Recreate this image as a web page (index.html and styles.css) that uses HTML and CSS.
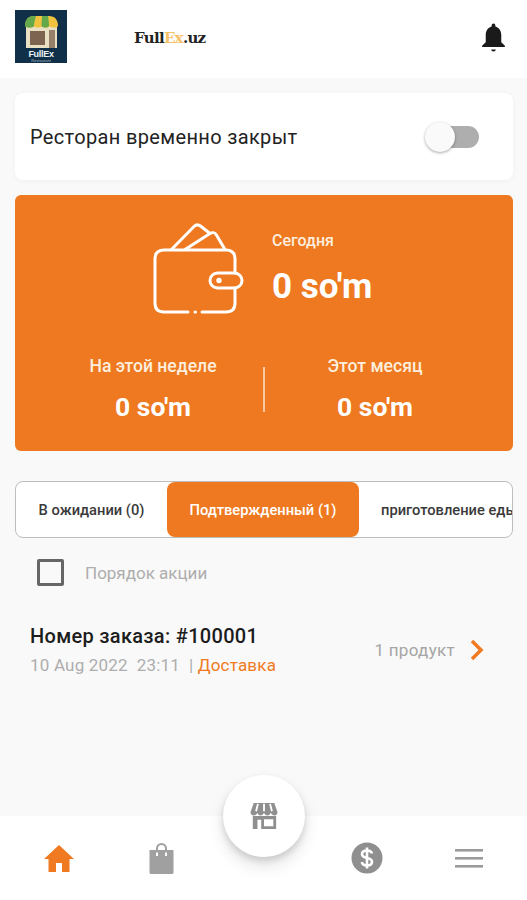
FILE: index.html
```html
<!DOCTYPE html>
<html lang="ru">
<head>
<meta charset="UTF-8">
<meta name="viewport" content="width=device-width, initial-scale=1.0">
<title>FullEx.uz</title>
<link rel="stylesheet" href="styles.css">
</head>
<body>
<div class="app">
  <header class="header">
    <div class="logo">
      <svg viewBox="0 0 52 53" width="52" height="53">
        <rect width="52" height="53" fill="#10304a"/>
        <rect x="11" y="15" width="31" height="23" fill="#e9e0c4"/>
        <path d="M10 16c0-6 3-10 9-10h15c6 0 9 4 9 10-1.500 2-7 2-8 0-1 2-7 2-8 0-1 2-7 2-8 0-1 2-7.500 2-9 0z" fill="#f0c23e"/>
        <path d="M10 16c0-6 3-10 9-10h2c-1 3-2 7-2 10-1 2-7.500 2-9 0zM27 6h6c.5 3 1 7 1 10-1 2-6.500 2-7.500 0 0-3 .5-7 .5-10z" fill="#63a94b"/>
        <rect x="15" y="21" width="15" height="14" fill="#7d6450"/>
        <rect x="34" y="20" width="6" height="18" fill="#97806a"/>
        <text class="logo-name" x="26" y="46.500" text-anchor="middle">FullEx</text>
        <text class="logo-sub" x="26" y="51.500" text-anchor="middle">Restaurant</text>
      </svg>
    </div>
    <div class="brand">Full<span class="brand-ex">Ex</span>.uz</div>
    <svg class="bell" viewBox="0 0 24 28" width="25" height="29">
      <path d="M12 .5c-1 0-1.800.8-1.800 1.800v1C6.600 4.300 4.500 7.500 4.500 11.500v7L1 22v1.200h22V22l-3.500-3.500v-7c0-4-2.100-7.200-5.700-8.200v-1C13.800 1.300 13 .5 12 .5z" fill="#1a1a1a"/>
      <path d="M9.800 25.500h4.400a2.200 2 0 0 1-4.400 0z" fill="#1a1a1a"/>
    </svg>
  </header>

  <main class="content">
    <section class="closed-card">
      <span class="closed-text">Ресторан временно закрыт</span>
      <div class="switch"><div class="switch-knob"></div></div>
    </section>

    <section class="stats-card">
      <div class="stats-top">
        <svg class="wallet" viewBox="0 0 96 96" width="96" height="96" fill="none" stroke="#fff" stroke-width="3" stroke-linecap="round" stroke-linejoin="round">
          <path d="M21.500 29.500L44 6.500c2-2 4.500-2 6.500-.5L60 13.500"/>
          <path d="M35 29.500L60 13.500c2.500-1.500 5-.8 6.300 1.200L75 29.500"/>
          <path d="M52 92H76c6 0 9-3 9-9V68M85 53V39c0-6-3-9-9-9H14c-6 0-9 3-9 9v44c0 6 3 9 9 9h24"/>
          <path d="M45 92h.5"/>
          <rect x="60" y="53" width="32" height="15" rx="7.500"/>
          <circle cx="69" cy="60.500" r="1.200"/>
        </svg>
        <div class="today">
          <div class="today-label">Сегодня</div>
          <div class="today-value">0 so'm</div>
        </div>
      </div>
      <div class="stats-bottom">
        <div class="stat">
          <div class="stat-label">На этой неделе</div>
          <div class="stat-value">0 so'm</div>
        </div>
        <div class="stat-divider"></div>
        <div class="stat">
          <div class="stat-label">Этот месяц</div>
          <div class="stat-value">0 so'm</div>
        </div>
      </div>
    </section>

    <nav class="tabs">
      <div class="tab tab-first">В ожидании (0)</div>
      <div class="tab tab-active">Подтвержденный (1)</div>
      <div class="tab tab-last">приготовление еды (0)</div>
    </nav>

    <label class="check-row">
      <span class="checkbox"></span>
      <span class="check-text">Порядок акции</span>
    </label>

    <div class="order">
      <div class="order-info">
        <div class="order-number">Номер заказа: #100001</div>
        <div class="order-meta">10 Aug 2022&nbsp; 23:11&nbsp; | <span class="order-type">Доставка</span></div>
      </div>
      <span class="order-count">1 продукт</span>
      <svg class="order-arrow" viewBox="0 0 16 22" width="16" height="22" fill="none" stroke="#ef7a21" stroke-width="3.500">
        <path d="M3 2l9 9-9 9"/>
      </svg>
    </div>
  </main>

  <footer class="bottom-nav">
    <svg viewBox="0 0 30 27" width="30" height="27">
      <path d="M15 0L0 14h4.500v13h7.500v-9h6v9h7.500V14H30z" fill="#ef7a21"/>
    </svg>
    <svg viewBox="0 0 25 31" width="25" height="31">
      <path d="M.5 7h24v22.500c0 .8-.7 1.500-1.500 1.500H2C1.200 31 .5 30.300.5 29.500z" fill="#a0a0a0"/>
      <path d="M8 11V5.500C8 2.800 10 1 12.500 1S17 2.800 17 5.500V11" fill="none" stroke="#a0a0a0" stroke-width="2"/>
      <rect x="7" y="9.500" width="2" height="3.500" fill="#fff"/>
      <rect x="16" y="9.500" width="2" height="3.500" fill="#fff"/>
    </svg>
    <div></div>
    <svg class="nav-dollar" viewBox="0 0 32 32" width="32" height="32">
      <circle cx="16" cy="16" r="15.500" fill="#8f8f8f"/>
      <path d="M21 11.500c-.5-2-2.500-3-5-3-3 0-5 1.500-5 3.800 0 5 10 2.500 10 7.400 0 2.300-2 3.800-5 3.800-2.700 0-4.700-1.200-5.300-3.300M16 5.500v21" fill="none" stroke="#fff" stroke-width="2.600"/>
    </svg>
    <svg class="nav-menu" viewBox="0 0 28 19" width="28" height="19" fill="#9b9b9b">
      <rect y="0" width="28" height="2.600"/>
      <rect y="8" width="28" height="2.600"/>
      <rect y="16" width="28" height="2.600"/>
    </svg>
  </footer>

  <div class="fab">
    <svg viewBox="0 0 30 30" width="28" height="28">
      <path d="M4 1h22l3.500 10c0 2-1.500 3.500-3.200 3.500S23 13 22.200 11.500c-.6 1.500-2 3-3.600 3s-3-1.500-3.600-3c-.6 1.500-2 3-3.600 3s-3-1.500-3.600-3C7.500 13 6 14.500 4 14.500S.5 13 .5 11z" fill="#8f8f8f"/>
      <path d="M8.500 2L6.500 10M15 2v8M21.500 2l2 8" stroke="#fff" stroke-width="2" fill="none"/>
      <path d="M3 15v14h5V19h4v10h16V15z" fill="#8f8f8f"/>
      <rect x="15" y="18.500" width="10" height="7.500" fill="#fff"/>
    </svg>
  </div>
</div>
</body>
</html>
```

FILE: styles.css
```css
* {
  box-sizing: border-box;
}
html, body {
  margin: 0;
  padding: 0;
}
body {
  font-family: Roboto, "Liberation Sans", sans-serif;
  background-color: #f9f9f9;
  color: #1c1c1c;
}
.app {
  position: relative;
  width: 527px;
  height: 900px;
  display: flex;
  flex-direction: column;
  overflow: hidden;
}
.header {
  height: 78px;
  flex-shrink: 0;
  background-color: #fff;
  display: flex;
  align-items: center;
  padding: 0 21px 0 15px;
}
.logo {
  width: 52px;
  height: 53px;
  margin-top: -5px;
  display: flex;
}
.logo-name {
  font-family: "Liberation Sans", sans-serif;
  font-weight: bold;
  font-size: 9px;
  letter-spacing: -0.3px;
  fill: #eef2f4;
}
.logo-sub {
  font-family: "Liberation Sans", sans-serif;
  font-size: 4px;
  fill: #a9b8c3;
}
.brand {
  margin-left: 67px;
  margin-top: -3px;
  font-family: "DejaVu Serif", serif;
  font-weight: bold;
  font-size: 15px;
  letter-spacing: -0.7px;
  color: #222;
}
.brand-ex {
  color: #f5c26b;
}
.bell {
  margin-left: auto;
  margin-top: -3px;
}
.content {
  flex: 1;
  padding: 15px 14px 0 15px;
}
.closed-card {
  height: 87px;
  background-color: #fff;
  border-radius: 8px;
  box-shadow: 0 1px 6px rgba(0, 0, 0, 0.04);
  display: flex;
  align-items: center;
  justify-content: space-between;
  padding: 0 34px 0 15px;
}
.closed-text {
  font-size: 20px;
  letter-spacing: 0.35px;
  color: #222;
}
.switch {
  position: relative;
  width: 50px;
  height: 22px;
  border-radius: 11px;
  background-color: #aeaeae;
}
.switch-knob {
  position: absolute;
  left: -4px;
  top: -4px;
  width: 30px;
  height: 30px;
  border-radius: 50%;
  background-color: #fafafa;
  box-shadow: 0 1px 3px rgba(0, 0, 0, 0.35);
}
.stats-card {
  margin-top: 15px;
  height: 256px;
  background-color: #ee7920;
  border-radius: 6px;
  color: #fff;
  padding-top: 25px;
}
.stats-top {
  display: flex;
  margin-left: 135px;
}
.today {
  margin-left: 26px;
}
.today-label {
  font-size: 16px;
  font-weight: 500;
  margin-top: 11px;
  color: #fdeedd;
}
.today-value {
  font-size: 35px;
  font-weight: 700;
  margin-top: 16px;
}
.stats-bottom {
  display: flex;
  align-items: center;
  margin-top: 40px;
  padding-left: 28px;
}
.stat {
  width: 220px;
  text-align: center;
}
.stat-label {
  font-size: 17.6px;
  font-weight: 500;
  color: #fdeedd;
}
.stat-value {
  font-size: 26.5px;
  font-weight: 700;
  margin-top: 15px;
}
.stat-divider {
  width: 2px;
  height: 45px;
  background-color: #f6c9a3;
}
.tabs {
  margin-top: 30px;
  height: 57px;
  background-color: #fff;
  border: 1px solid #bdbdbd;
  border-radius: 8px;
  display: flex;
  overflow: hidden;
  font-size: 14.7px;
  font-weight: 500;
}
.tab {
  display: flex;
  align-items: center;
  justify-content: center;
  flex-shrink: 0;
  white-space: nowrap;
  color: #3a3a3a;
}
.tab-first {
  width: 151px;
}
.tab-active {
  width: 192px;
  background-color: #ee7920;
  color: #fff;
  border-radius: 8px;
}
.tab-last {
  padding-left: 22px;
  justify-content: flex-start;
}
.check-row {
  display: flex;
  align-items: center;
  margin-top: 21px;
  padding-left: 22px;
}
.checkbox {
  width: 27px;
  height: 27px;
  border: 3px solid #666;
  border-radius: 2px;
}
.check-text {
  margin-left: 21px;
  font-size: 17px;
  color: #adadad;
}
.order {
  display: flex;
  align-items: center;
  margin-top: 38px;
}
.order-info {
  padding-left: 15px;
}
.order-number {
  font-size: 20px;
  font-weight: 500;
  letter-spacing: 0.3px;
  color: #1c1c1c;
}
.order-meta {
  margin-top: 7px;
  font-size: 17px;
  color: #adadad;
  letter-spacing: 0.2px;
}
.order-type {
  color: #ef7a21;
}
.order-count {
  margin-left: auto;
  font-size: 17px;
  color: #a5a5a5;
  letter-spacing: 0.3px;
}
.order-arrow {
  margin-left: 14px;
  margin-right: 28px;
}
.bottom-nav {
  height: 84px;
  flex-shrink: 0;
  background-color: #fff;
  display: grid;
  grid-template-columns: repeat(5, 103px);
  justify-items: center;
  align-items: center;
  padding: 0 0 0 7px;
}
.nav-dollar {
  margin-right: 1px;
}
.nav-menu {
  margin-right: 3px;
}
.fab {
  position: absolute;
  left: 223px;
  top: 775px;
  width: 82px;
  height: 82px;
  border-radius: 50%;
  background-color: #fff;
  box-shadow: 0 4px 6px rgba(0, 0, 0, 0.14), 0 9px 14px 3px rgba(0, 0, 0, 0.08);
  display: flex;
  align-items: center;
  justify-content: center;
}
```
